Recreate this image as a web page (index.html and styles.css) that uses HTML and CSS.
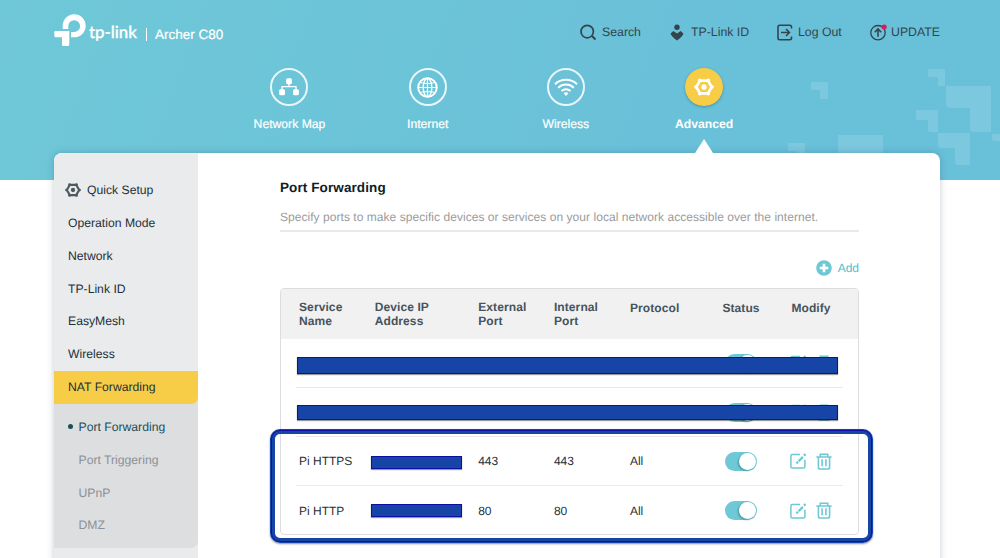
FILE: index.html
```html
<!DOCTYPE html>
<html lang="en">
<head>
<meta charset="utf-8">
<title>Archer C80</title>
<link rel="stylesheet" href="styles.css">
</head>
<body>
<svg class="defs" width="0" height="0" aria-hidden="true">
  <symbol id="gear" viewBox="0 0 20 20">
    <path d="M6 3.600H14L17.700 10L14 16.400H6L2.300 10Z" fill="none" stroke="currentColor" stroke-width="2.600" stroke-linejoin="round"/>
    <g fill="currentColor"><circle cx="5.600" cy="3.200" r="1.700"/><circle cx="14.400" cy="3.200" r="1.700"/><circle cx="18.200" cy="10" r="1.700"/><circle cx="14.400" cy="16.800" r="1.700"/><circle cx="5.600" cy="16.800" r="1.700"/><circle cx="1.800" cy="10" r="1.700"/><circle cx="10" cy="10" r="2.700"/></g>
  </symbol>
  <symbol id="edit" viewBox="0 0 16 16">
    <path d="M10 1.600H2.200Q.9 1.600 .9 2.900V13.800Q.9 15.100 2.200 15.100H13.600Q14.900 15.100 14.900 13.800V6.800" fill="none" stroke="currentColor" stroke-width="1.500"/>
    <path d="M6.400 10.400L8 8.800M8.600 8.200L12.900 3.900M14 2.600L15.500 1.100" fill="none" stroke="currentColor" stroke-width="2.300"/>
  </symbol>
  <symbol id="trash" viewBox="0 0 16 17">
    <path d="M.4 4H15.600M4.300 4V1.200H11.700V4M2.400 4V14.200Q2.400 16 4.200 16H11.800Q13.600 16 13.600 14.200V4M6.100 6.300V13.200M9.900 6.300V13.200" fill="none" stroke="currentColor" stroke-width="1.600"/>
  </symbol>
</svg>
<header class="header">
  <svg class="pattern" width="212" height="112" viewBox="-12 0 212 112">
    <path d="M11 13H28V30H21Q20 30 20 29V21H12.500Q11 21 11 19.500Z"/>
    <path d="M128 0H145V17H139Q138 17 138 16V8H129.500Q128 8 128 6.500Z"/>
    <path d="M146 17H191V63H174Q170 63 170 59V39H150Q146 39 146 35Z"/>
    <path d="M116 41H138V63H130Q128 63 128 61V51H118Q116 51 116 49Z"/>
    <path d="M138 64H170V96H158Q155 96 155 93V79H141Q138 79 138 76Z"/>
    <path d="M192 65H200V72H194Q192 72 192 70ZM38 66H83V90H38ZM-12 74H5V90H-3V82H-12Z"/>
  </svg>
  <div class="topbar">
    <div class="brand">
      <svg width="32" height="33" viewBox="0 0 32 33" fill="#fff">
        <path d="M8.700 15V12A11.500 11.500 0 1 1 20.200 23.300H17V18H20.200A5.900 5.900 0 1 0 14.300 12V15Z"/>
        <path d="M1.300 17H15.300V30.500Q15.300 32 13.800 32H9.500Q8 32 8 30.500V23.200H1.800Q.3 23.200 .3 21.700V18Q.3 17 1.300 17Z"/>
      </svg>
      <span class="wordmark">tp-link</span>
      <span class="bar"></span>
      <span class="model">Archer C80</span>
    </div>
    <a class="tool search"><svg width="17" height="17" viewBox="0 0 17 17"><circle cx="7.200" cy="7.600" r="6.200" fill="none" stroke="currentColor" stroke-width="1.700"/><path d="M12 12L15.500 15.500" stroke="currentColor" stroke-width="2"/></svg><span>Search</span></a>
    <a class="tool id"><svg width="14" height="17" viewBox="0 0 14 17" fill="currentColor"><circle cx="7" cy="3.200" r="2.700"/><path d="M.6 9.400L3.400 7L7 9.600L10.600 7L13.400 9.400Q13 12 7 16.600Q1 12 .6 9.400Z"/></svg><span>TP-Link ID</span></a>
    <a class="tool out"><svg width="16" height="17" viewBox="0 0 16 17" fill="none" stroke="currentColor" stroke-width="1.600"><path d="M14.500 4.500V3Q14.500 1.300 12.800 1.300H2.700Q1 1.300 1 3V14Q1 15.700 2.700 15.700H12.800Q14.500 15.700 14.500 14V12.500M4 8.500H12M9 5L12.400 8.500L9 12"/></svg><span>Log Out</span></a>
    <a class="tool update"><svg width="18" height="17" viewBox="0 0 18 17" fill="none" stroke="currentColor" stroke-width="1.300"><circle cx="8" cy="8.700" r="7.200"/><path d="M8 12.700V5.200M4.800 8.200L8 5L11.200 8.200" stroke-width="1.600"/><circle cx="14.200" cy="3" r="2.500" fill="#d51c62" stroke="none"/></svg><span>UPDATE</span></a>
  </div>
  <nav class="nav">
    <a class="tab"><span class="disc"><svg width="20" height="18" viewBox="0 0 20 18"><path d="M10 4V8.600M3 12V8.600H17V12" fill="none" stroke="#fff" stroke-width="1.300"/><g fill="#fff"><rect x="7.100" y=".3" width="5.800" height="6" rx="1.500"/><rect x=".1" y="11.300" width="5.900" height="6" rx="1.500"/><rect x="14" y="11.300" width="5.900" height="6" rx="1.500"/></g></svg></span><span>Network Map</span></a>
    <a class="tab"><span class="disc"><svg width="21" height="21" viewBox="0 0 21 21" fill="none" stroke="#fff" stroke-width="1.400"><circle cx="10.500" cy="10.500" r="9.300" stroke-width="1.900"/><ellipse cx="10.500" cy="10.500" rx="4.300" ry="9.300"/><path d="M10.500 1V20M1 10.500H20M3 5.500Q10.500 7.500 18 5.500M3 15.500Q10.500 13.500 18 15.500" stroke-width="1.200"/></svg></span><span>Internet</span></a>
    <a class="tab"><span class="disc"><svg width="24" height="20" viewBox="0 0 24 20" fill="none" stroke="#fff" stroke-width="2"><path d="M1 7.200A16 16 0 0 1 23 7.200M4.200 10.700A11.300 11.300 0 0 1 19.800 10.700M7.500 14A6.500 6.500 0 0 1 16.500 14"/><path d="M9.600 16.200Q12 14.200 14.400 16.200L12 18.900Z" fill="#fff" stroke="none"/></svg></span><span>Wireless</span></a>
    <a class="tab active"><span class="disc"><svg width="20" height="20"><use href="#gear"/></svg></span><span>Advanced</span></a>
  </nav>
</header>
<div class="card">
  <aside class="side">
    <a class="item quick"><svg width="16" height="16"><use href="#gear"/></svg>Quick Setup</a>
    <a class="item">Operation Mode</a>
    <a class="item">Network</a>
    <a class="item">TP-Link ID</a>
    <a class="item">EasyMesh</a>
    <a class="item">Wireless</a>
    <div class="group">
      <a class="item current">NAT Forwarding</a>
      <div class="subs">
        <a class="item sub on">Port Forwarding</a>
        <a class="item sub">Port Triggering</a>
        <a class="item sub">UPnP</a>
        <a class="item sub">DMZ</a>
      </div>
    </div>
  </aside>
  <main class="main">
    <h1>Port Forwarding</h1>
    <p class="desc">Specify ports to make specific devices or services on your local network accessible over the internet.</p>
    <div class="actions"><svg width="16" height="16" viewBox="0 0 16 16"><circle cx="8" cy="8" r="7.800" fill="#6ec8d5"/><path d="M8 3.700V12.300M3.700 8H12.300" stroke="#fff" stroke-width="2.600"/></svg><span>Add</span></div>
    <section class="table">
      <div class="cols head"><span>Service<br>Name</span><span>Device IP<br>Address</span><span>External<br>Port</span><span>Internal<br>Port</span><span class="single">Protocol</span><span class="single">Status</span><span class="single">Modify</span></div>
      <div class="cols row"><span></span><span></span><span></span><span></span><span></span><i class="toggle"></i><span class="tools"><svg width="16" height="16"><use href="#edit"/></svg><svg width="16" height="17"><use href="#trash"/></svg></span><b class="redact first"></b></div>
      <div class="cols row"><span></span><span></span><span></span><span></span><span></span><i class="toggle"></i><span class="tools"><svg width="16" height="16"><use href="#edit"/></svg><svg width="16" height="17"><use href="#trash"/></svg></span><b class="redact second"></b></div>
      <div class="cols row"><span>Pi HTTPS</span><b class="ip"></b><span>443</span><span>443</span><span>All</span><i class="toggle"></i><span class="tools"><svg width="16" height="16"><use href="#edit"/></svg><svg width="16" height="17"><use href="#trash"/></svg></span></div>
      <div class="cols row"><span>Pi HTTP</span><b class="ip up"></b><span>80</span><span>80</span><span>All</span><i class="toggle"></i><span class="tools"><svg width="16" height="16"><use href="#edit"/></svg><svg width="16" height="17"><use href="#trash"/></svg></span></div>
      <div class="outline"></div>
    </section>
  </main>
</div>
</body>
</html>
```
FILE: styles.css
```css
* { box-sizing: border-box; }
body {
  margin: 0;
  height: 558px;
  overflow: hidden;
  background: #fff;
  color: #1f3038;
  font: 12px/16px "Liberation Sans", Arial, sans-serif;
  text-rendering: geometricPrecision;
}
svg { display: block; flex: none; }
.defs { position: absolute; }
.header {
  position: relative;
  height: 180px;
  background: linear-gradient(110deg, #6fc8d7, #69c0d9 70%);
}
.pattern { position: absolute; right: 0; top: 69px; fill: #7bc8df; }
.topbar {
  position: relative;
  display: flex;
  align-items: flex-start;
  height: 68px;
  padding: 14px 0 0 54px;
}
.brand { display: flex; width: 526px; color: #fff; }
.wordmark { margin: 8px 0 0 3px; width: 49px; font: 500 16.800px/20px Lato, sans-serif; white-space: nowrap; -webkit-text-stroke: .3px #fff; }
.bar { width: 1px; height: 13px; margin: 14px 8px 0 8px; background: #fff; }
.model { margin-top: 13px; font-size: 13.500px; line-height: 16px; -webkit-text-stroke: .2px #fff; }
.tool { display: flex; align-items: center; height: 18px; margin-top: 9px; color: #35444b; font-size: 12.300px; white-space: nowrap; }
.search { width: 90px; gap: 5px; }
.id { width: 107px; gap: 7px; }
.out { width: 93px; gap: 5px; }
.update { gap: 3px; }
.nav { position: relative; z-index: 1; display: grid; grid-template-columns: repeat(4, 138.200px); width: 780px; padding-left: 220.400px; color: #fff; }
.tab { display: flex; flex-direction: column; align-items: center; gap: 10px; font-size: 12.200px; -webkit-text-stroke: .2px #fff; }
.disc { display: flex; align-items: center; justify-content: center; width: 38px; height: 38px; border: 2px solid rgba(255, 255, 255, .85); border-radius: 50%; }
.active { font-weight: 700; -webkit-text-stroke: 0; }
.active::after { content: ""; width: 18px; height: 14px; margin-top: -3px; background: #fff; clip-path: polygon(50% 0, 100% 100%, 0 100%); }
.active .disc { border: 0; background: #f7cd48; box-shadow: 0 1px 3px rgba(20, 80, 100, .4); }
.header { z-index: auto; }
.card {
  position: relative;
  display: flex;
  width: 886px;
  height: 430px;
  margin: -27px 0 0 54px;
  border-radius: 8px 8px 0 0;
  background: #fff;
  box-shadow: 0 0 7px rgba(30, 60, 70, .25);
}
.side { width: 144px; padding-top: 20.600px; border-radius: 8px 0 0 0; background: #eaebed; }
.item { display: flex; align-items: center; height: 32.850px; padding-left: 14px; font-size: 12.200px; white-space: nowrap; }
.quick { padding-left: 11px; gap: 6px; }
.quick svg { color: #4d5a60; }
.group { border-radius: 0 0 7px 0; background: #dddee0; }
.current { border-radius: 0 0 7px 0; background: #f7cd48; }
.subs { padding: 7px 0 6px; }
.sub { padding-left: 24.500px; color: #8b9194; }
.on { padding-left: 14px; color: #1c4d59; }
.on::before { content: ""; width: 5px; height: 5px; margin-right: 5.500px; border-radius: 50%; background: currentColor; }
.main { width: 661px; padding: 26px 0 0 82px; }
h1 { margin: 0; font-size: 13.500px; line-height: 18px; letter-spacing: .1px; color: #0f1d24; }
.desc { width: 579px; height: 35px; margin: 0; padding-top: 12px; border-bottom: 2px solid #e9e9ea; color: #9a9b9d; letter-spacing: .045px; white-space: nowrap; }
.actions { display: flex; justify-content: flex-end; align-items: center; gap: 6px; height: 16px; margin: 28px 0 12px; color: #4fbdcb; }
.table { position: relative; width: 579px; height: 247px; border: 1px solid #dcdddf; border-radius: 4px; }
.cols { display: grid; grid-template-columns: 75.700px 103.500px 75.700px 76px 92.500px 69px 1fr; }
.head { height: 50px; padding: 11px 0 0 18px; border-radius: 3px 3px 0 0; background: #f1f1f2; color: #46545c; font-weight: 700; line-height: 14px; letter-spacing: .1px; }
.single { padding-top: 1px; }
.row { position: relative; height: 49px; margin: 0 15px; padding-left: 3px; align-items: center; border-bottom: 1px solid #e9e9ea; }
.row:nth-child(5) { border: 0; }
.toggle { display: block; width: 32px; height: 19px; margin-left: 3px; border-radius: 10px; background: #6ec8d5; }
.toggle::after { content: ""; display: block; width: 17px; height: 17px; margin-left: 14px; border-radius: 50%; background: #fff; box-shadow: -1px 1px 2px rgba(0, 70, 80, .4); transform: translateY(1px); }
.tools { display: flex; gap: 10px; align-items: center; margin-left: -1px; color: #6ec8d5; }
.redact, .ip { background: #1744a7; border: 1px solid #0b0fa6; box-shadow: 0 1px 1px rgba(0, 0, 0, .4); }
.ip { width: 91px; height: 13px; margin: 2px 0 0 -4px; }
.up { margin-top: 0; }
.redact { position: absolute; left: 1px; width: 541px; }
.first { top: 18px; height: 17px; }
.second { left: .5px; top: 17px; height: 15px; }
.outline { position: absolute; left: -11px; top: 140px; width: 603px; height: 114px; border: 5px solid #1744a7; border-radius: 10px; box-shadow: 0 1px 2px rgba(0, 0, 0, .45); }
.outline::before { content: ""; position: absolute; inset: -4px; border: 1px solid #0b0fa6; border-radius: 9px; }
```
